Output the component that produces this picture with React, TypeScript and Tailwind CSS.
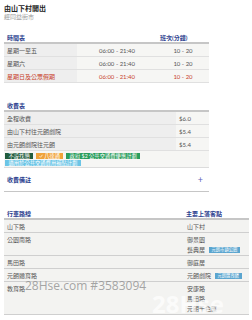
import React from "react";

const timetable = [
  { day: "星期一至五", time: "06:00 - 21:40", freq: "10 - 20", holiday: false },
  { day: "星期六", time: "06:00 - 21:40", freq: "10 - 20", holiday: false },
  { day: "星期日及公眾假期", time: "06:00 - 21:40", freq: "10 - 20", holiday: true },
];

const fares = [
  { label: "全程收費", price: "$6.0" },
  { label: "由山下村往元朗劇院", price: "$5.4" },
  { label: "由元朗劇院往元朗", price: "$5.4" },
];

const stops: { road: string; points: { name: string; tag?: string }[] }[] = [
  { road: "山下路", points: [{ name: "山下村" }] },
  { road: "公園南路", points: [{ name: "御景園" }, { name: "藝典居", tag: "元朗市鎮公園" }] },
  { road: "馬田路", points: [{ name: "御庭居" }] },
  { road: "元朗體育路", points: [{ name: "元朗劇院", tag: "元朗體育館" }] },
  { road: "教育路", points: [{ name: "安康路" }, { name: "馬田路" }, { name: "元朗千色匯" }] },
];

const App: React.FC = () => {
  return (
    <div className="relative w-[252px] h-[320px] overflow-hidden bg-white px-[4px] pt-[4px] font-['Lato','Noto_Sans_CJK_TC',sans-serif] text-[6px] text-[#555]">
      <h1 className="text-[7px] leading-[9px] font-bold text-[#222]">由山下村開出</h1>
      <p className="text-[6px] leading-[7px] text-[#999]">經同益街市</p>

      {/* timetable */}
      <section className="mt-[12px] w-[205px]">
        <div className="grid grid-cols-[73px_80px_52px] h-[10px] items-center font-bold text-[#2d3f8f]">
          <span className="pl-[3px]">時間表</span>
          <span />
          <span className="pl-[3px]">班次(分鐘)</span>
        </div>
        <div className="border-t-2 border-[#c6c6c6]">
          {timetable.map((row) => (
            <div
              key={row.day}
              className={`grid grid-cols-[73px_80px_52px] h-[13px] border-b border-[#e0e0e0] ${row.holiday ? "text-[#c8432c]" : ""}`}
            >
              <span className="flex items-center pl-[3px] bg-[#eeeeee]">{row.day}</span>
              <span className="flex items-center justify-center bg-[#f6f6f4]">{row.time}</span>
              <span className="flex items-center justify-center bg-[#f6f6f4]">{row.freq}</span>
            </div>
          ))}
        </div>
      </section>

      {/* fares */}
      <section className="mt-[17px] w-[205px]">
        <div className="h-[10px] flex items-center pl-[3px] font-bold text-[#2d3f8f]">收費表</div>
        <div className="border-t-2 border-[#c6c6c6]">
          {fares.map((f) => (
            <div key={f.label} className="grid grid-cols-[172px_33px] h-[13px] border-b border-[#e0e0e0]">
              <span className="flex items-center pl-[3px] bg-[#eeeeee]">{f.label}</span>
              <span className="flex items-center pl-[3px] bg-[#f6f6f4]">{f.price}</span>
            </div>
          ))}
          <div className="flex flex-wrap gap-x-[3px] gap-y-[1px] bg-[#f6f6f4] px-[1px] py-[1.5px] border-b border-[#dcdcdc] text-[5.3px] leading-[6px] text-white">
            <span className="px-[3.5px] bg-[#215c3d]">不設找贖</span>
            <span className="flex items-center gap-[1px] px-[3px] bg-[#f0a33a]">
              <svg viewBox="0 0 8 8" className="w-[4px] h-[4px]" fill="none" stroke="white" strokeWidth="1.4">
                <path d="M1 4.5 L3 6.5 L7 1.5" />
              </svg>
              八達通
            </span>
            <span className="px-[3.5px] bg-[#2a9d5c]">政府 $2 公共交通費優惠計劃</span>
            <span className="px-[3.5px] bg-[#6cc5e6]">適用於公共交通費用補貼計劃</span>
          </div>
        </div>
        <div className="h-[24px] flex items-center justify-between pl-[3px] pr-[6px] border-b border-[#c6c6c6] font-bold text-[#2d3f8f]">
          <span>收費備註</span>
          <span className="text-[9px] font-normal text-[#5b62b8]">+</span>
        </div>
      </section>

      {/* route */}
      <section className="mt-[16px] w-[245px]">
        <div className="grid grid-cols-[180px_65px] h-[10px] items-center font-bold text-[#2d3f8f]">
          <span className="pl-[3px]">行車路線</span>
          <span className="pl-[2px]">主要上落客點</span>
        </div>
        <div className="border-t-2 border-[#c6c6c6] bg-[#f3f3f1]">
          {stops.map((s) => (
            <div key={s.road} className="grid grid-cols-[180px_65px] border-b border-[#cfcfcf] pt-[1.5px] pb-[0.5px] leading-[10px]">
              <span className="pl-[3px]">{s.road}</span>
              <div className="flex flex-col pl-[3px]">
                {s.points.map((p) => (
                  <span key={p.name} className="flex items-center gap-[4px]">
                    {p.name}
                    {p.tag && (
                      <span className="px-[2.5px] bg-[#5aa5cf] text-white text-[4.3px] leading-[6px]">{p.tag}</span>
                    )}
                  </span>
                ))}
              </div>
            </div>
          ))}
        </div>
      </section>

      {/* watermark */}
      <div className="absolute left-[25px] top-[279px] text-[12px] leading-[14px] font-['Open_Sans',sans-serif] text-[#8f8f8f]/80 pointer-events-none">
        28Hse.com #3583094
      </div>
      <div className="absolute left-[152px] top-[290px] text-[24px] leading-[28px] font-bold font-['Open_Sans',sans-serif] text-white/70 pointer-events-none">
        28Hse
      </div>
    </div>
  );
};

export default App;
